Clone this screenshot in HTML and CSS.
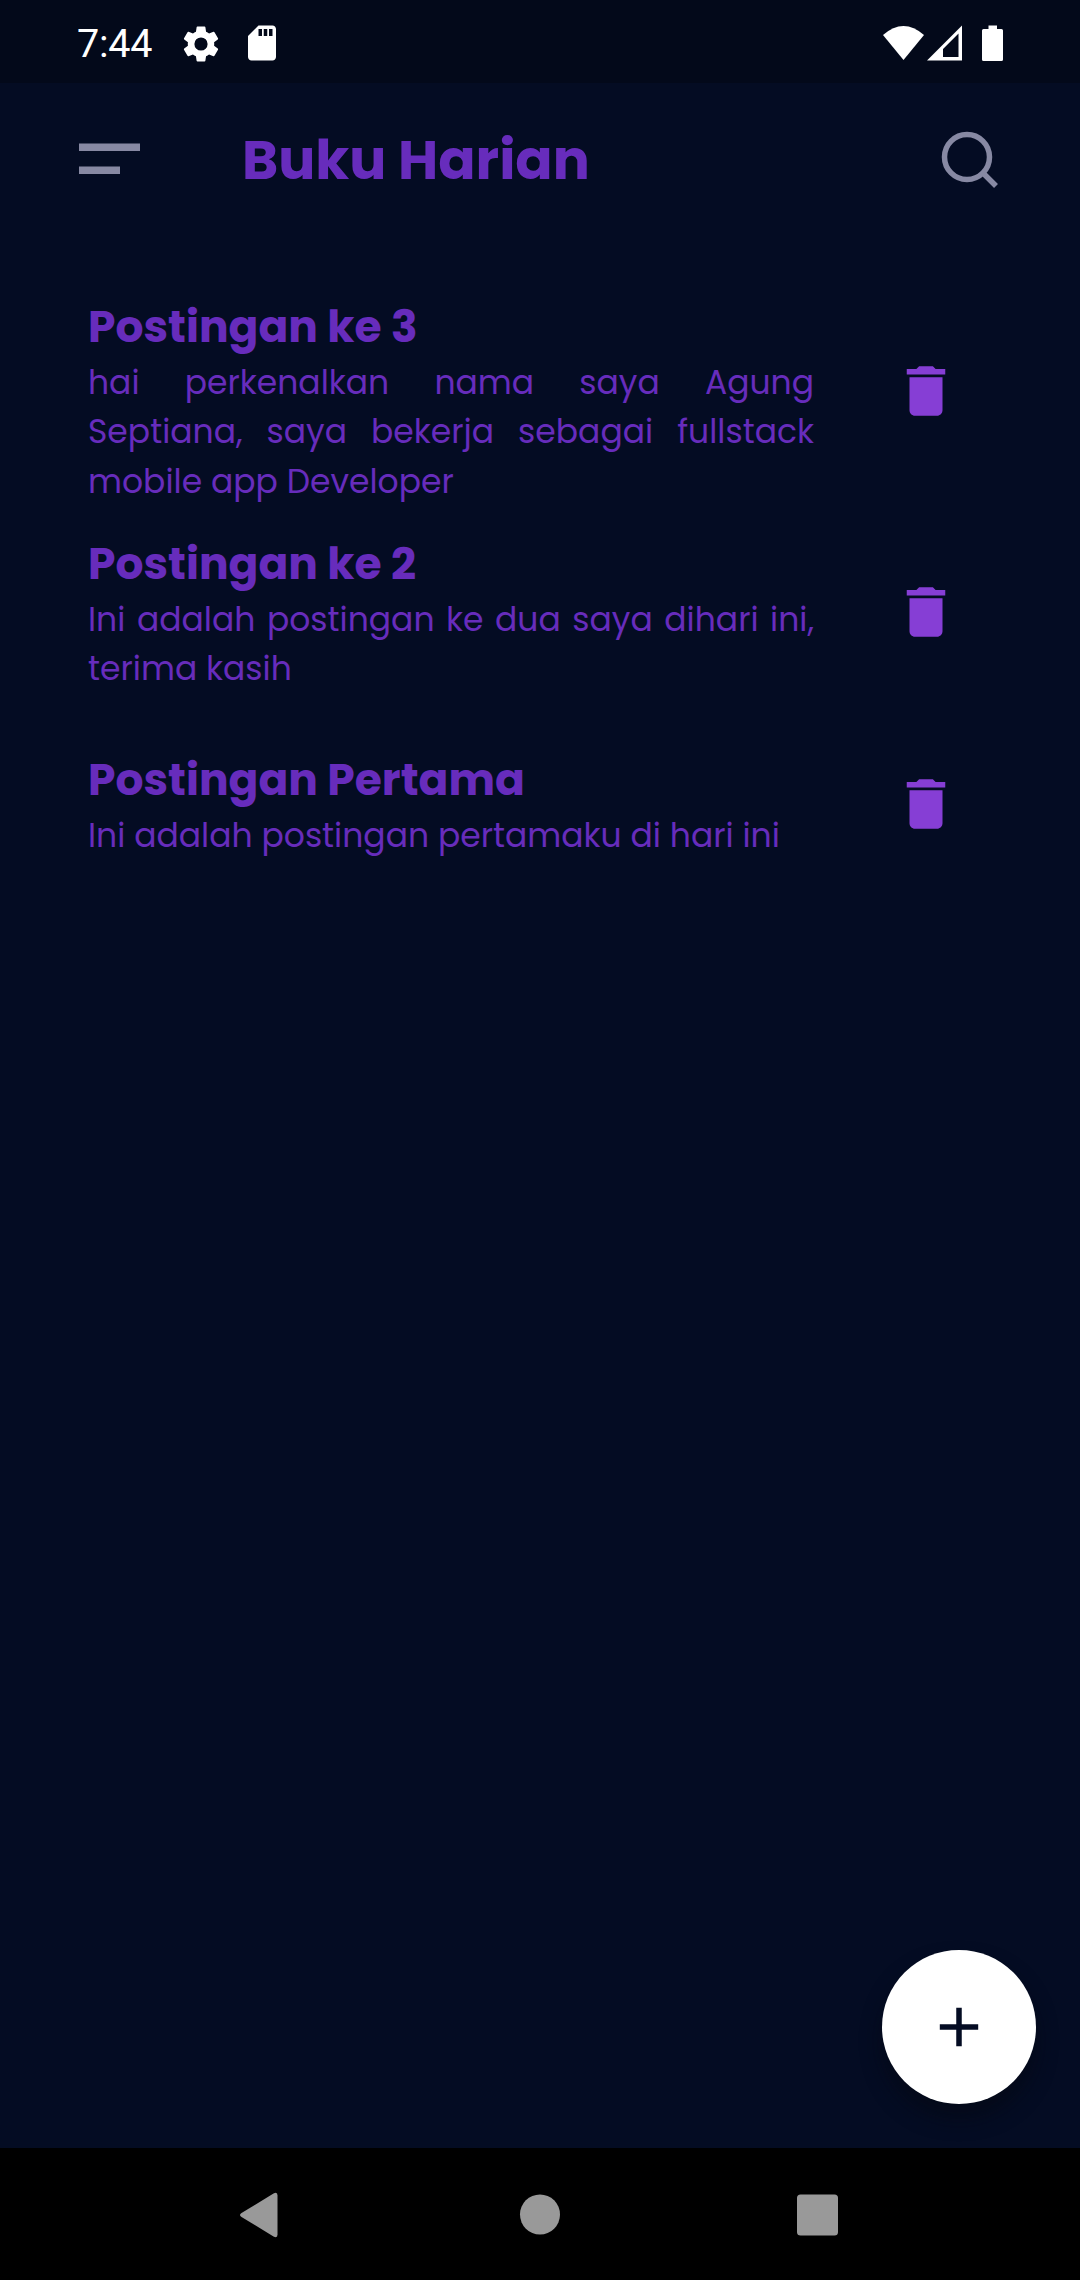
FILE: index.html
```html
<!DOCTYPE html>
<html lang="id">
<head>
<meta charset="utf-8">
<title>Buku Harian</title>
<link rel="stylesheet" href="styles.css">
</head>
<body>
<div class="screen">
  <div class="status-bar">
    <span class="clock">7:44</span>
    <svg class="gear" viewBox="0 0 24 24"><path d="M19.14 12.94c.04-.3.06-.61.06-.94s-.02-.64-.07-.94l2.03-1.58a.49.49 0 0 0 .12-.61l-1.92-3.32a.49.49 0 0 0-.59-.22l-2.39.96c-.5-.38-1.03-.7-1.62-.94L14.4 2.81A.48.48 0 0 0 13.92 2.4h-3.84a.47.47 0 0 0-.47.41l-.36 2.54c-.59.24-1.13.57-1.62.94l-2.39-.96a.48.48 0 0 0-.59.22L2.74 8.87a.47.47 0 0 0 .12.61l2.03 1.58c-.05.3-.09.63-.09.94s.02.64.07.94l-2.03 1.58a.49.49 0 0 0-.12.61l1.92 3.32c.12.22.37.29.59.22l2.39-.96c.5.38 1.03.7 1.62.94l.36 2.54c.05.24.24.41.48.41h3.84c.24 0 .44-.17.47-.41l.36-2.54c.59-.24 1.13-.56 1.62-.94l2.39.96c.22.08.47 0 .59-.22l1.92-3.32a.47.47 0 0 0-.12-.61zM12 15.6a3.6 3.6 0 1 1 0-7.2 3.6 3.6 0 0 1 0 7.2z"/></svg>
    <svg class="sd-card" viewBox="0 0 24 24"><path d="M18 2h-8L4 8v12c0 1.100.9 2 2 2h12c1.100 0 2-.9 2-2V4c0-1.100-.9-2-2-2zm-6 6h-2V4h2zm3 0h-2V4h2zm3 0h-2V4h2z"/></svg>
    <svg class="signals" viewBox="0 0 124 40">
      <path d="M3 12Q23.500-6 44 12L23.500 37z"/>
      <path fill-rule="evenodd" d="M47 37.500 82 2.500V37.500zM63 34H78.500V10.500L63 26z"/>
      <path d="M108.500 2.500h8.500v3.500h4.500q1.500 0 1.500 1.500v29q0 1.500-1.500 1.500h-18q-1.500 0-1.500-1.500V7.500q0-1.500 1.500-1.500h5z"/>
    </svg>
  </div>

  <header class="app-bar">
    <svg class="menu" viewBox="0 0 62 34"><path d="M0 1.500h61v7.500H0zM0 24.500h41v7.500H0z"/></svg>
    <h1>Buku Harian</h1>
    <svg class="search" viewBox="0 0 60 60"><circle cx="27" cy="27" r="22.500"/><path d="M42.500 42.500 56 56"/></svg>
  </header>

  <main class="posts">
    <article class="post post-long">
      <div class="post-text">
        <h2>Postingan ke 3</h2>
        <p>hai perkenalkan nama saya Agung Septiana, saya bekerja sebagai fullstack mobile app Developer</p>
      </div>
      <svg class="trash" viewBox="0 0 24 24"><path d="M6 19c0 1.100.9 2 2 2h8c1.100 0 2-.9 2-2V7H6zM19 4h-3.500l-1-1h-5l-1 1H5v2h14z"/></svg>
    </article>
    <article class="post">
      <div class="post-text">
        <h2>Postingan ke 2</h2>
        <p>Ini adalah postingan ke dua saya dihari ini, terima kasih</p>
      </div>
      <svg class="trash" viewBox="0 0 24 24"><path d="M6 19c0 1.100.9 2 2 2h8c1.100 0 2-.9 2-2V7H6zM19 4h-3.500l-1-1h-5l-1 1H5v2h14z"/></svg>
    </article>
    <article class="post post-short">
      <div class="post-text">
        <h2>Postingan Pertama</h2>
        <p>Ini adalah postingan pertamaku di hari ini</p>
      </div>
      <svg class="trash" viewBox="0 0 24 24"><path d="M6 19c0 1.100.9 2 2 2h8c1.100 0 2-.9 2-2V7H6zM19 4h-3.500l-1-1h-5l-1 1H5v2h14z"/></svg>
    </article>
  </main>

  <div class="fab"><svg viewBox="0 0 40 40"><path d="M20 .8v38.400M.8 20h38.400"/></svg></div>

  <nav class="nav-bar">
    <svg viewBox="0 0 46 46"><path d="M4.500 21 36.500 1.500q4-2 4 2v39q0 4-4 2L4.500 25q-3-2 0-4z"/></svg>
    <svg viewBox="0 0 46 46"><circle cx="24" cy="22.500" r="20"/></svg>
    <svg viewBox="0 0 46 46"><rect x="2" y="2.500" width="41" height="41" rx="3.500"/></svg>
  </nav>
</div>
</body>
</html>
```
FILE: styles.css
```css
* { box-sizing: border-box; margin: 0; padding: 0; }

body {
  background: #040c23;
  font-family: Poppins, Inter, sans-serif;
  color: #672cbc;
}

svg { display: block; flex: none; }

.screen {
  position: relative;
  display: flex;
  flex-direction: column;
  width: 1080px;
  height: 2280px;
  overflow: hidden;
}

.status-bar {
  display: flex;
  align-items: center;
  height: 83px;
  padding: 4px 76px 0 77px;
  background: #03091a;
  color: #fff;
  fill: #fff;
}
.clock { width: 102px; margin-top: 1px; font: 39.500px/46px Roboto, sans-serif; letter-spacing: -.2px; }
.gear { width: 44px; height: 44px; }
.sd-card { width: 42px; height: 42px; margin: -1px 0 0 18px; }
.signals { width: 124px; height: 40px; margin: -1px 0 0 auto; }

.app-bar {
  display: flex;
  align-items: center;
  height: 152px;
  padding: 0 80.500px 0 79px;
}
.menu { width: 62px; height: 34px; fill: #8789a3; }
.app-bar h1 { margin: 2px 0 0 101px; font-size: 55px; line-height: 80px; font-weight: 700; }
.search {
  width: 60px;
  height: 60px;
  margin: 2px 0 0 auto;
  fill: none;
  stroke: #8789a3;
  stroke-width: 5.5;
}

.posts { flex: 1; padding: 62px 121px 0 88px; }
.post { display: flex; align-items: center; justify-content: space-between; }
.post-long { margin-bottom: 28px; }
.post-short { margin-top: 56.500px; }
.post-text { width: 726px; }
.post h2 { font-size: 44px; line-height: 60px; font-weight: 700; }
.post p { margin-top: 1px; font-size: 33px; line-height: 49.300px; text-align: justify; }
.trash { width: 66px; height: 66px; margin-bottom: 3px; fill: #863ed5; }
.post-long .trash { margin-bottom: 20px; }
.post-short .trash { margin-bottom: 2px; }

.fab {
  position: absolute;
  left: 882px;
  top: 1950px;
  display: flex;
  align-items: center;
  justify-content: center;
  width: 154px;
  height: 154px;
  border-radius: 50%;
  background: #fff;
  box-shadow: 0 14px 20px rgba(5, 8, 18, .6);
}
.fab svg { width: 40px; height: 40px; stroke: #040c23; stroke-width: 5.5; }

.nav-bar {
  display: flex;
  align-items: center;
  justify-content: space-between;
  height: 132px;
  padding: 2px 239px 0 237px;
  background: #000;
  fill: #999;
}
.nav-bar svg { width: 46px; height: 46px; }
```
